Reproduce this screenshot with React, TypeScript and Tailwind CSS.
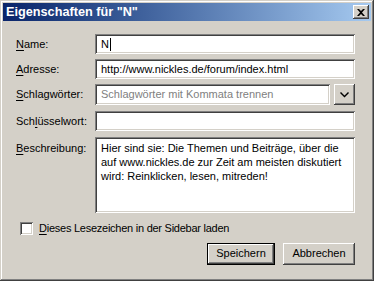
import React from "react";

const sunken =
  "bg-white shadow-[inset_1px_1px_#808080,inset_-1px_-1px_#ffffff,inset_2px_2px_#404040,inset_-2px_-2px_#d4d0c8]";
const raised =
  "bg-[#d4d0c8] shadow-[inset_-1px_-1px_#404040,inset_1px_1px_#ffffff,inset_-2px_-2px_#808080,inset_2px_2px_#d4d0c8]";

function Label({ pre, hot, rest, top }: { pre?: string; hot: string; rest: string; top?: boolean }) {
  return (
    <div className={`w-[79px] shrink-0 ${top ? "pt-[3px]" : "flex items-center"}`}>
      <span>
        {pre}
        <span className="underline underline-offset-[2px]">{hot}</span>
        {rest}
      </span>
    </div>
  );
}

export default function App() {
  return (
    <div className="w-[374px] h-[281px] bg-[#d4d0c8] p-[3px] flex flex-col text-[11px] text-black font-['Liberation_Sans',Arial,sans-serif] shadow-[inset_-1px_-1px_#404040,inset_1px_1px_#d4d0c8,inset_-2px_-2px_#808080,inset_2px_2px_#ffffff]">
      {/* title bar */}
      <div className="h-[18px] flex items-center bg-gradient-to-r from-[#0a246a] to-[#a6caf0] pl-[3px] pr-[2px]">
        <span className="flex-1 text-white font-bold text-[12.7px] leading-none">Eigenschaften für "N"</span>
        <div className={`w-[16px] h-[14px] flex items-center justify-center ${raised}`}>
          <svg width="8" height="7" viewBox="0 0 8 7">
            <path d="M0 0h2l2 2 2-2h2L5 3.5 8 7H6L4 5 2 7H0l3-3.5z" fill="#000" />
          </svg>
        </div>
      </div>

      <div className="flex flex-col pl-[13px] pr-[16px] pt-[13px]">
        <div className="flex h-[20px]">
          <Label hot="N" rest="ame:" />
          <div className={`flex-1 flex items-center px-[6px] ${sunken}`}>
            <span>N</span>
            <span className="w-px h-[13px] bg-black ml-px" />
          </div>
        </div>

        <div className="flex h-[20px] mt-[5px]">
          <Label hot="A" rest="dresse:" />
          <div className={`flex-1 flex items-center px-[6px] ${sunken}`}>http://www.nickles.de/forum/index.html</div>
        </div>

        <div className="flex h-[21px] mt-[5px]">
          <Label hot="S" rest="chlagwörter:" />
          <div className={`flex-1 flex items-center px-[6px] text-[#808080] ${sunken}`}>Schlagwörter mit Kommata trennen</div>
          <div className={`w-[21px] ml-[4px] flex items-center justify-center ${raised}`}>
            <svg width="9" height="6" viewBox="0 0 9 6">
              <path d="M0 1l1-1 3.5 3.5L8 0l1 1-4.5 4.5z" fill="#000" />
            </svg>
          </div>
        </div>

        <div className="flex h-[20px] mt-[6px]">
          <Label pre="Sch" hot="l" rest="üsselwort:" />
          <div className={`flex-1 ${sunken}`} />
        </div>

        <div className="flex h-[76px] mt-[6px]">
          <Label hot="B" rest="eschreibung:" top />
          <div className={`flex-1 px-[6px] pt-[4px] leading-[14px] ${sunken}`}>
            Hier sind sie: Die Themen und Beiträge, über die auf www.nickles.de zur Zeit am meisten diskutiert wird: Reinklicken, lesen, mitreden!
          </div>
        </div>

        <div className="flex items-center mt-[7px] ml-[4px]">
          <div className={`w-[13px] h-[13px] ${sunken}`} />
          <span className="ml-[6px] tracking-[-0.25px]">
            <span className="underline underline-offset-[2px]">D</span>ieses Lesezeichen in der Sidebar laden
          </span>
        </div>

        <div className="flex justify-end gap-[8px] mt-[6px]">
          <div className="w-[68px] h-[22px] border border-black">
            <div className={`w-full h-full flex items-center justify-center ${raised}`}>Speichern</div>
          </div>
          <div className={`w-[72px] h-[22px] flex items-center justify-center ${raised}`}>Abbrechen</div>
        </div>
      </div>
    </div>
  );
}
